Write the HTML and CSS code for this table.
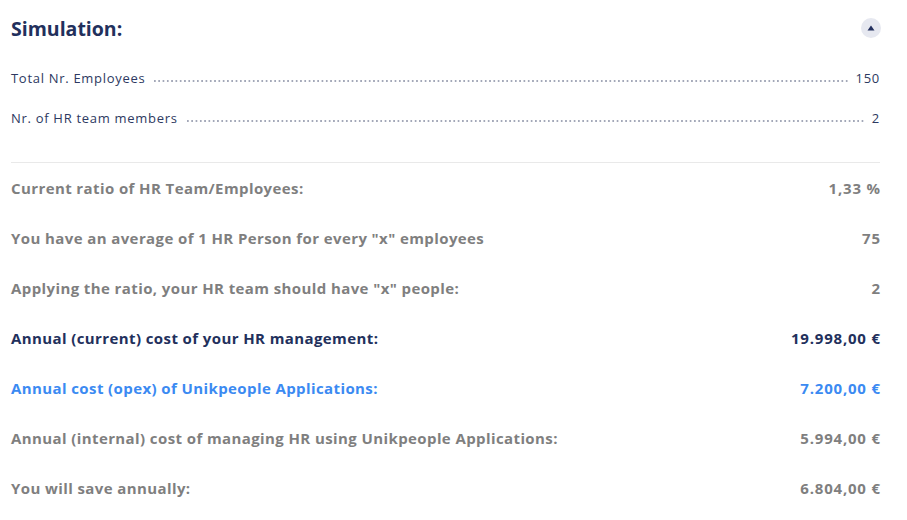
FILE: index.html
```html
<!DOCTYPE html>
<html>
<head>
<meta charset="utf-8">
<link rel="stylesheet" href="styles.css">
</head>
<body>
<div class="panel">
  <div class="header">
    <h2 class="title">Simulation:</h2>
    <button class="toggle" aria-label="collapse">
      <svg width="8" height="6" viewBox="0 0 8 6"><path d="M4 0.5 L7.5 5.5 L0.5 5.5 Z" fill="#23305e"/></svg>
    </button>
  </div>
  <div class="inputs">
    <div class="input-row"><span class="in-label">Total Nr. Employees</span><span class="leader"></span><span class="in-value">150</span></div>
    <div class="input-row"><span class="in-label">Nr. of HR team members</span><span class="leader"></span><span class="in-value">2</span></div>
  </div>
  <div class="results">
    <div class="res-row"><span>Current ratio of HR Team/Employees:</span><span>1,33 %</span></div>
    <div class="res-row"><span>You have an average of 1 HR Person for every "x" employees</span><span>75</span></div>
    <div class="res-row"><span>Applying the ratio, your HR team should have "x" people:</span><span>2</span></div>
    <div class="res-row dark"><span>Annual (current) cost of your HR management:</span><span>19.998,00 €</span></div>
    <div class="res-row blue"><span>Annual cost (opex) of Unikpeople Applications:</span><span>7.200,00 €</span></div>
    <div class="res-row"><span>Annual (internal) cost of managing HR using Unikpeople Applications:</span><span>5.994,00 €</span></div>
    <div class="res-row"><span>You will save annually:</span><span>6.804,00 €</span></div>
  </div>
</div>
</body>
</html>
```
FILE: styles.css
```css
html, body { margin: 0; padding: 0; background: #fff; }
body { font-family: "Open Sans", "Liberation Sans", sans-serif; }
.panel { padding: 0 27px 0 11px; }
.header { display: flex; align-items: center; justify-content: space-between; height: 56px; }
.title { margin: 0; font-size: 19.5px; font-weight: 700; color: #22305c; }
.toggle { width: 20px; height: 20px; border-radius: 50%; border: none; background: #e6e8f0; display: flex; align-items: center; justify-content: center; padding: 0; margin-right: -1px; }
.inputs { padding-top: 2px; padding-bottom: 24px; border-bottom: 1px solid #e9e9e9; }
.input-row { display: flex; align-items: baseline; height: 40px; line-height: 40px; font-size: 13px; color: #2d3961; letter-spacing: 0.7px; }
.leader { flex: 1; height: 2px; margin: 0 8px 0 9px; background-image: linear-gradient(to right, #a3a8b8 40%, transparent 40%); background-size: 4.3px 2px; background-repeat: repeat-x; position: relative; top: -1px; }
.res-row { display: flex; justify-content: space-between; height: 50px; line-height: 50px; font-size: 15px; font-weight: 700; color: #7f7f7f; letter-spacing: 0.4px; }
.res-row span:last-child { letter-spacing: 0.8px; margin-right: -0.8px; }
.res-row.dark { color: #22305c; }
.res-row.blue { color: #3b8af2; }
```
